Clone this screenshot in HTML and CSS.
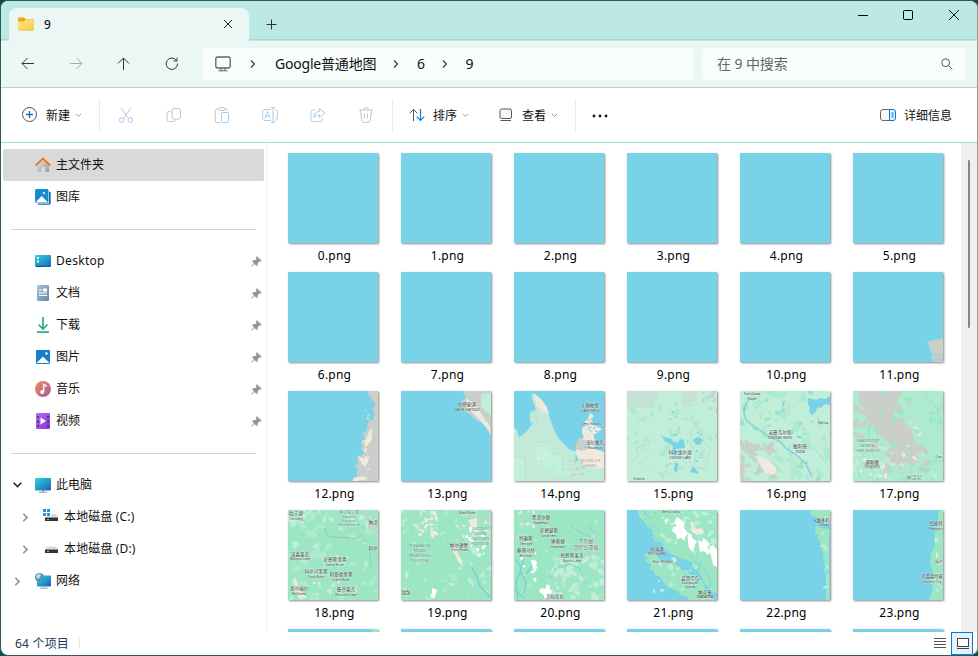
FILE: index.html
```html
<!DOCTYPE html>
<html lang="zh-CN">
<head>
<meta charset="utf-8">
<title>9</title>
<link rel="stylesheet" href="styles.css">
</head>
<body>
<div class="window">
  <header class="titlebar">
    <div class="tab">
      <svg class="folder" width="16" height="14" viewBox="0 0 16 14"><defs><linearGradient id="gf" x1="0" y1="0" x2="1" y2="1"><stop offset="0" stop-color="#ffe69a"/><stop offset="1" stop-color="#ffc93e"/></linearGradient></defs><path d="M0 2Q0 .5 1.5 .5H5.5Q6.300 .5 7 1.500L7.500 2H14.500Q16 2 16 3.500V8H0Z" fill="#f0a90b"/><path d="M0 4.500H6L8 2.300H14.500Q16 2.300 16 3.500V12Q16 13.300 14.700 13.300H1.300Q0 13.300 0 12Z" fill="url(#gf)"/><path d="M.3 13H15.700" stroke="#e9b23a" stroke-width=".7"/></svg>
      <span class="tab-name">9</span>
      <svg class="tab-close" width="10" height="10" viewBox="0 0 10 10"><path d="M1 1 9 9M9 1 1 9" stroke="#222" fill="none"/></svg>
    </div>
    <svg class="newtab" width="11" height="11" viewBox="0 0 11 11"><path d="M5.500 .5V10.500M.5 5.500H10.500" stroke="#333" fill="none"/></svg>
    <div class="controls">
      <svg width="46" height="30" viewBox="0 0 46 30"><path d="M19 14.500H29" stroke="#000"/></svg>
      <svg width="46" height="30" viewBox="0 0 46 30"><rect x="18.500" y="9.500" width="9" height="9" rx="1" fill="none" stroke="#000"/></svg>
      <svg width="46" height="30" viewBox="0 0 46 30"><path d="M18 9 28 19M28 9 18 19" stroke="#111"/></svg>
    </div>
  </header>
  <nav class="nav">
    <div class="nav-buttons">
      <svg viewBox="0 0 48 32"><path d="M30 15.500H18M23.500 10 18 15.500 23.500 21"/></svg>
      <svg class="dim" viewBox="0 0 48 32"><path d="M18 15.500H30M24.500 10 30 15.500 24.500 21"/></svg>
      <svg viewBox="0 0 48 32"><path d="M23.500 22V10M18 15.500 23.500 10 29 15.500"/></svg>
      <svg viewBox="0 0 48 32"><path d="M28.500 12.500A5.700 5.700 0 1 0 29.500 15.500M29 9.800V13H25.600"/></svg>
    </div>
    <div class="address">
      <svg class="pc" width="16" height="16" viewBox="0 0 16 16"><rect x=".8" y="1" width="14.400" height="11" rx="1.800" fill="none" stroke="#5c6362" stroke-width="1.300"/><path d="M6 12V14.500M10 12V14.500M3.500 14.800H12.500" stroke="#5c6362" fill="none"/></svg>
      <svg class="crumb-arrow" width="6" height="10" viewBox="0 0 6 10"><path d="M1 1.500 4.500 5 1 8.500"/></svg>
      <span class="crumb first">Google普通地图</span>
      <svg class="crumb-arrow" width="6" height="10" viewBox="0 0 6 10"><path d="M1 1.500 4.500 5 1 8.500"/></svg>
      <span class="crumb">6</span>
      <svg class="crumb-arrow" width="6" height="10" viewBox="0 0 6 10"><path d="M1 1.500 4.500 5 1 8.500"/></svg>
      <span class="crumb">9</span>
    </div>
    <div class="search"><span>在 9 中搜索</span>
      <svg width="12" height="12" viewBox="0 0 12 12"><circle cx="4.700" cy="4.700" r="3.900"/><path d="M7.500 7.500 11.300 11.300"/></svg>
    </div>
  </nav>
  <div class="toolbar">
    <div class="tool new"><svg width="16" height="16" viewBox="0 0 16 16"><circle cx="8.500" cy="7.500" r="7" fill="#fff" stroke="#555"/><path d="M8.500 4V11M5 7.500H12" stroke="#0870c4" stroke-width="1.300"/></svg><span>新建</span><svg class="down" width="7" height="5" viewBox="0 0 7 5"><path d="M1 1 3.500 3.500 6 1"/></svg></div>
    <i class="sep"></i>
    <div class="actions">
      <svg viewBox="0 0 16 16"><path class="g" d="M3 .5 10 11M13 .5 6 11"/><circle class="b" cx="3.700" cy="13" r="2.300"/><circle class="b" cx="12.300" cy="13" r="2.300"/></svg>
      <svg viewBox="0 0 16 16"><path class="g" d="M4.500 4.500H3Q1 4.500 1 6.500V12Q1 14.500 3.500 14.500H7Q9 14.500 9 12.800"/><rect class="b" x="6" y="1.500" width="8.500" height="10.500" rx="2"/></svg>
      <svg viewBox="0 0 16 16"><path class="g" d="M5 2H3Q1.300 2 1.300 3.700V14Q1.300 15.500 3 15.500H6M11 2H12Q13.300 2 13.300 3.500"/><rect class="g" x="4.500" y=".7" width="6.500" height="2.800" rx="1.200"/><rect class="b" x="7.500" y="5.500" width="7" height="10" rx="1"/></svg>
      <svg viewBox="0 0 16 16"><path class="g" d="M9 2.500H3Q.6 2.500 .6 5V11Q.6 13.500 3 13.500H9M13 2.500Q15.400 2.500 15.400 5V11Q15.400 13.500 13 13.500"/><path class="b" d="M11 .5V15.500M9 .5H13M9 15.500H13M2.700 11.500 5.500 4.500 8.300 11.500M3.700 9H7.300"/></svg>
      <svg viewBox="0 0 16 16"><path class="g" d="M5 3H3.500Q1 3 1 5.500V12Q1 14.500 3.500 14.500H10Q12.500 14.500 12.500 12V11"/><path class="b" d="M9.500 1.500 14.800 6 9.500 10.500V8Q6 7.600 3.800 10.500Q4.500 4.800 9.500 4.200Z"/></svg>
      <svg viewBox="0 0 16 16"><path class="g" d="M1 3H15M5.500 3Q5.500 .7 8 .7T10.500 3M2.500 3 3.600 13.300Q3.800 15.400 6 15.400H10Q12.200 15.400 12.400 13.300L13.500 3M6.500 6.500V11.500M9.500 6.500V11.500"/></svg>
    </div>
    <i class="sep"></i>
    <div class="tool sort"><svg width="16" height="14" viewBox="0 0 16 14"><path d="M4.500 13V1.500M.7 5.300 4.500 1.500 8.300 5.300" fill="none" stroke="#555"/><path d="M11.500 1V12.500M7.700 8.700 11.500 12.500 15.300 8.700" fill="none" stroke="#0a7bd6" stroke-width="1.200"/></svg><span>排序</span><svg class="down" width="7" height="5" viewBox="0 0 7 5"><path d="M1 1 3.500 3.500 6 1"/></svg></div>
    <div class="tool view"><svg width="14" height="14" viewBox="0 0 14 14"><rect x="1" y="1" width="11.500" height="9.500" rx="1.500" fill="#f7f7f7" stroke="#555"/><path d="M1.500 12.500H12" stroke="#555"/></svg><span>查看</span><svg class="down" width="7" height="5" viewBox="0 0 7 5"><path d="M1 1 3.500 3.500 6 1"/></svg></div>
    <i class="sep"></i>
    <svg class="more" width="16" height="4" viewBox="0 0 16 4"><circle cx="2" cy="2" r="1.400"/><circle cx="8" cy="2" r="1.400"/><circle cx="14" cy="2" r="1.400"/></svg>
    <div class="tool details"><svg width="16" height="12" viewBox="0 0 16 12"><path d="M10 .5H3Q.5 .5 .5 3V9Q.5 11.500 3 11.500H10" fill="#fafafa" stroke="#666"/><path d="M9.500 .5H13Q15.500 .5 15.500 3V9Q15.500 11.500 13 11.500H9.500ZM11.300 4H13.800M11.300 6H13.800M11.300 8H13.800" fill="#edf7ff" stroke="#0874c9"/></svg><span>详细信息</span></div>
  </div>
  <main class="body">
    <aside class="sidebar" id="sidebar">
      <div class="row selected"><svg class="icon" viewBox="0 0 16 16"><defs><linearGradient id="gh" y2="1" x2="1"><stop stop-color="#e7e7e7"/><stop offset="1" stop-color="#999"/></linearGradient></defs><path d="M2 7 8 2 14 7V15H10.300V10H6.500V15H2Z" fill="url(#gh)"/><path d="M.7 8.500 8 1.500 15.300 8.500" fill="none" stroke="#ea7717" stroke-width="1.800"/></svg><span>主文件夹</span></div>
      <div class="row"><svg class="icon" viewBox="0 0 16 16"><path d="M14 2.500Q15.700 2.500 15.700 4V14Q15.700 15.700 14 15.700H4Q2.500 15.700 2.500 14.500H14Z" fill="#176aaf"/><rect width="13.500" height="14" rx="1.500" fill="#188ad4"/><path d="M.5 13.500 6.700 7 13 13.500Z" fill="#fff"/><circle cx="9" cy="4" r="1.100" fill="#fff"/></svg><span>图库</span></div>
      <hr>
      <div class="row pinned"><svg class="icon" viewBox="0 0 16 16"><defs><linearGradient id="gd" x2="1" y2="1"><stop stop-color="#38d2df"/><stop offset="1" stop-color="#1267b7"/></linearGradient></defs><rect y="2" width="16" height="12" rx="1" fill="url(#gd)"/><path d="M2 4H4V6H2ZM2 7.500H4V9.500H2Z" fill="#d9ffff"/><path d="M1 13.300H10M11 13.300H12M13 13.300H14" stroke="#064b80"/></svg><span class="latin">Desktop</span></div>
      <div class="row pinned"><svg class="icon" viewBox="0 0 16 16"><defs><linearGradient id="gt" x2="1" y2="1"><stop stop-color="#afc7de"/><stop offset="1" stop-color="#6684a5"/></linearGradient></defs><rect x="2" width="12" height="16" rx="1" fill="url(#gt)"/><path d="M4 5H7M4 8H12M4 10.500H12" stroke="#fff"/><path d="M8 3.500H12V6.500H8Z" fill="#fff"/></svg><span>文档</span></div>
      <div class="row pinned"><svg class="icon" viewBox="0 0 16 16"><path d="M8 0V12M3.500 7.500 8 12 12.500 7.500M2 15.200H14" fill="none" stroke="#20b28c" stroke-width="1.700"/></svg><span>下载</span></div>
      <div class="row pinned"><svg class="icon" viewBox="0 0 16 16"><rect x="1" y="1" width="14" height="14" rx="1" fill="#137fca"/><path d="M1.500 14 8 7.500 14.500 14Z" fill="#fff"/><circle cx="11.500" cy="4.500" r="1.200" fill="#fff"/></svg><span>图片</span></div>
      <div class="row pinned"><svg class="icon" viewBox="0 0 16 16"><defs><linearGradient id="gm" x2="1" y2="1"><stop stop-color="#f08b57"/><stop offset="1" stop-color="#a95aa5"/></linearGradient></defs><circle cx="8" cy="8" r="8" fill="url(#gm)"/><path d="M8.700 11V3.500L11 4.500V6" fill="none" stroke="#fff" stroke-width="1.300"/><circle cx="7.200" cy="11" r="2" fill="#fff"/></svg><span>音乐</span></div>
      <div class="row pinned"><svg class="icon" viewBox="0 0 16 16"><defs><linearGradient id="gv" x2="1" y2="1"><stop stop-color="#b66af0"/><stop offset="1" stop-color="#7f3bd5"/></linearGradient></defs><rect x="1" width="14" height="16" rx="1" fill="url(#gv)"/><path d="M5.500 4.500 11 8 5.500 11.500Z" fill="#fff"/><path d="M3 3V14M13 3V14" stroke="#43227d" stroke-width="1.500" stroke-dasharray="2 2.500"/></svg><span>视频</span></div>
      <hr>
      <div class="row tree"><svg class="arrow open" width="9" height="6" viewBox="0 0 9 6"><path d="M.7 .8 4.500 4.600 8.300 .8"/></svg><svg class="icon" viewBox="0 0 16 16"><path d="M7 13H9V15H7Z" fill="#aab6c1"/><path d="M4 15.200H12" stroke="#8c9cab"/><rect y="1" width="16" height="12.500" rx=".8" fill="url(#gd)"/></svg><span>此电脑</span></div>
      <div class="row tree child"><svg class="arrow" width="6" height="9" viewBox="0 0 6 9"><path d="M.8 .7 4.600 4.500 .8 8.300"/></svg><svg class="icon" viewBox="0 0 16 16"><path d="M0 0H3V3H0ZM4 0H7V3H4ZM0 4H3V7H0ZM4 4H7V7H4Z" fill="#2593dc"/><path d="M8 5H13L15 8.500H3L3.500 7.500H8Z" fill="#d8dcdc"/><rect x="2" y="8.500" width="13" height="3.500" rx=".5" fill="#333"/><path d="M4 10.500H6" stroke="#5cdb78"/></svg><span>本地磁盘 (C:)</span></div>
      <div class="row tree child"><svg class="arrow" width="6" height="9" viewBox="0 0 6 9"><path d="M.8 .7 4.600 4.500 .8 8.300"/></svg><svg class="icon" viewBox="0 0 16 16"><path d="M2 8.500 4 5.500H13L15 8.500Z" fill="#d8dcdc"/><rect x="2" y="8.500" width="13" height="3.500" rx=".5" fill="#333"/><path d="M4 10.500H6" stroke="#5cdb78"/></svg><span>本地磁盘 (D:)</span></div>
      <div class="row tree"><svg class="arrow" width="6" height="9" viewBox="0 0 6 9"><path d="M.8 .7 4.600 4.500 .8 8.300"/></svg><svg class="icon" viewBox="0 0 16 16"><rect x="2" y="2.500" width="14" height="11" rx=".8" fill="url(#gd)"/><path d="M9 13V15M5 15.200H13" stroke="#9aabb8"/><circle cx="4.500" cy="4.500" r="4.500" fill="#4e95bb"/><path d="M2 2Q5-.5 6 2.500L4 5.500Q1 6 1 4Z" fill="#bddde9"/></svg><span>网络</span></div>
    </aside>
    <section class="files" id="files"></section>
    <div class="scroll"><div class="thumb"></div></div>
  </main>
  <footer class="status"><span>64 个项目</span><i></i>
    <svg class="list" width="12" height="11" viewBox="0 0 12 11"><path d="M0 .5H12M0 3.500H12M0 6.500H12M0 9.500H12" stroke="#555"/></svg>
    <div class="large"><svg width="13" height="12" viewBox="0 0 13 12"><rect x="1.500" y=".5" width="11" height="8" fill="#fff" stroke="#444"/><path d="M1 10.500H13" stroke="#444"/></svg></div>
  </footer>
</div>
<script src="maps.js"></script>
</body>
</html>
```
FILE: styles.css
```css
* { box-sizing: border-box; }
html, body { margin: 0; height: 100%; }
body { background: #064f49; font: 12px "Noto Sans", "Noto Sans CJK SC", sans-serif; color: #111; overflow: hidden; }
svg { display: block; flex: none; }
i { display: block; }
.window { width: 978px; height: 656px; display: flex; flex-direction: column; background: #fff; border: 1px solid #2f5955; border-right-color: #999; border-radius: 8px; overflow: hidden; }
.titlebar { height: 40px; flex: none; background: #bce9e3; border-bottom: 1px solid #c5e6e2; display: flex; align-items: flex-start; box-shadow: inset 0 -1px #a9d6d0; }
.tab { width: 240px; height: 33px; margin: 7px 0 0 8px; background: #eaf7f5; border-radius: 8px 8px 0 0; display: flex; align-items: center; padding: 0 16px 2px 9px; }
.tab-name { margin-left: 10px; padding-top: 2px; flex: 1; font-weight: 500; }
.newtab { margin: 18px 0 0 17px; }
.controls { margin-left: auto; display: flex; }
.nav { height: 47px; flex: none; background: #eaf7f5; border-bottom: 1px solid #b1d5d1; display: flex; align-items: center; padding: 0 11px 0 3px; font-size: 14px; }
.nav-buttons { display: flex; }
.nav-buttons svg { width: 48px; height: 32px; fill: none; stroke: #333; stroke-width: 1; }
.nav-buttons .dim { stroke: #a3adab; }
.address, .search { height: 32px; background: #f9fdfc; border-radius: 4px; display: flex; align-items: center; }
.address { width: 492px; margin-left: 6px; padding-left: 13px; }
.pc { margin-right: 19px; }
.crumb-arrow { fill: none; stroke: #333; stroke-width: 1.1; margin-right: 18px; }
.crumb { margin-right: 17px; padding-bottom: 2px; letter-spacing: -.4px; }
.crumb.first { width: 101px; margin: 0 17px 0 1px; letter-spacing: -.2px; white-space: nowrap; }
.search { width: 264px; margin-left: 8px; padding: 0 13px 0 15px; justify-content: space-between; color: #626766; }
.search span { padding-bottom: 2px; letter-spacing: -.1px; }
.search svg { fill: none; stroke: #555; }
.toolbar { height: 55px; flex: none; border-bottom: 1px solid #a7d7d1; display: flex; align-items: center; padding: 0 25px 0 20px; }
.tool { display: flex; align-items: center; }
.tool span { margin-left: 8px; line-height: 18px; padding-top: 2px; }
.down { fill: none; stroke: #999; margin-left: 5px; }
.sep { width: 1px; height: 32px; background: #e9e9e9; }
.new { width: 78px; }
.new span { margin-left: 9px; }
.actions { display: flex; margin: 0 2px; }
.actions svg { width: 48px; height: 16px; fill: none; }
.actions .g { stroke: #c6c6c6; }
.actions .b { stroke: #a1cdf0; }
.sort { margin-left: 16px; width: 90px; }
.view { width: 76px; }
.view span { margin-left: 9px; }
.more { margin-left: 16px; margin-top: 2px; fill: #111; }
.details { margin-left: auto; }
.body { height: 489px; flex: none; display: flex; background: #fff; }
.sidebar { width: 266px; border-right: 1px solid #f1f1f1; padding: 6px 2px 0; }
.row { height: 32px; display: flex; align-items: center; padding: 0 2px 2px 32px; border-radius: 2px; }
.row.selected { background: #d9d9d9; width: 261px; }
.row .icon { width: 16px; height: 16px; margin: 2px 5px 0 0; }
.row .latin { letter-spacing: .3px; padding-top: 1px; }
.sidebar hr { margin: 16px 8px 15px; border: 0; height: 1px; background: #d2d2d2; }
.pin { margin: 2px 0 0 auto; }
.row.tree { padding-left: 10px; }
.arrow { width: 9px; margin: 2px 13px 0 0; fill: none; stroke: #8b8b8b; stroke-width: 1.5; }
.arrow.open { stroke: #222; }
.row.child { padding-left: 18px; letter-spacing: .14px; }
.files { width: 694px; padding: 10px 0 0 21px; display: grid; grid-template-columns: repeat(6, 113px); grid-auto-rows: 119px; overflow: hidden; align-content: start; }
.file { width: 93px; text-align: center; font-size: 12px; letter-spacing: .2px; color: #000; }
.map { width: 90px; height: 90px; margin-bottom: 4px; overflow: hidden; box-shadow: 1px 1px 2px #888; }
.map text { letter-spacing: 0; text-anchor: middle; font-family: "Noto Sans CJK SC", sans-serif; paint-order: stroke; stroke: #ffffff90; stroke-width: .7px; }
.scroll { width: 16px; background: #f0f0f0; padding: 17px 0 0 7px; }
.thumb { width: 2px; height: 168px; background: #858585; border-radius: 1px; }
.status { height: 23px; flex: none; display: flex; align-items: center; padding-left: 14px; color: #1e395b; }
.status span { letter-spacing: .2px; padding-bottom: 1px; }
.status i { width: 1px; height: 11px; background: #e7e7e7; margin-left: 10px; }
.list { margin-left: auto; }
.large { width: 22px; height: 23px; margin: 0 4px 0 5px; border: 1px solid #0879d0; background: #e6f3fc; display: flex; align-items: center; justify-content: center; }
```
FILE: maps.js
```js
const W = '#78d3e9', M = '#c0eed9', G = '#9ce6c3', L = '#aeead0', Y = '#cacfca', C = '#f0eade', F = '#ffffff';
function rng(s) { return () => (s = (s * 16807) % 2147483647) / 2147483647; }
/* Scatters small irregular patches: [colour, count, size, x, y, width, height] */
function scatter(list, seed) {
  const r = rng(seed * 7919 + 13);
  for (let i = 0; i < 9; i++) r();
  return list.map(([c, n, s, x, y, w, h]) => {
    let d = '';
    for (let i = 0; i < n; i++) {
      const cx = x + r() * w, cy = y + r() * h, z = s * (.45 + r()), tilt = r() * 3;
      for (let k = 0; k < 7; k++) {
        const a = k * .9, q = z * (.5 + r() * .7);
        const px = Math.cos(a) * q, py = Math.sin(a) * q * .55;
        d += (k ? 'L' : 'M') + (cx + px * Math.cos(tilt) - py * Math.sin(tilt)).toFixed(1) + ' ' + (cy + px * Math.sin(tilt) + py * Math.cos(tilt)).toFixed(1);
      }
      d += 'Z';
    }
    return `<path fill="${c}" d="${d}"/>`;
  }).join('');
}
const p = (c, d) => `<path fill="${c}" d="${d}"/>`;
const l = (c, w, d) => `<path fill="none" stroke="${c}" stroke-width="${w}" d="${d}"/>`;
const t = (x, y, s, z = 4.6, c = '#303535') => `<text x="${x}" y="${y}" font-size="${z}" fill="${c}">${s}</text>`;
const T = '#3f8577';
const maps = {
  11: [W, p(Y, 'M74 70 90 66V90H80V88L78 85 79 81 77 77 76 73Z') + l(W, .7, 'M79 83H90M80 86H88M81 88H90')],
  12: [W, p(Y, 'M81 0H90V90H64L66 87 70 85 68 82 70 78 67 76 70 72 69 65 75 64 76 61 73 58 75 55 73 54 77 48 75 42 78 40 79 37 80 31 83 29 87 29 85 28 87 23 84 18 87 15 87 12 83 9 84 7 80 4Z') + p(C, 'M81 41 84 37 84 49 80 54 77 56 77 50ZM70 65 77 68 81 65 80 71 77 76 73 71ZM65 87 76 85 80 88 70 90H65Z') + p(Y, 'M76 18 79 19 78 22ZM80 22 83 25 79 26Z') + scatter([[C, 8, 1.8, 73, 25, 15, 60], [W, 5, 1, 76, 35, 6, 20]], 12)],
  13: [W, p(Y, 'M62 0H90V45L86 38 82 32 75 29 70 24 64 20 61 15 62 9 65 7Z') + p(M, 'M80 3 90 2V25L84 20 80 15Z') + p(C, 'M65 7 76 16 81 24 88 34 90 43 84 35 75 25 67 17Z') + t(66, 15, '中萨勒港') + t(66, 20, 'Sachs Harbour', 3.8)],
  14: [W, p('#c3e9d9', 'M18 2 25 8 31 15 36 27 40 39 46 49 55 58 62 61 61 70 90 70V90H0V36L3 39 5 46 10 43 18 34 16 30 16 21 22 19 20 12 18 8Z') + p(C, 'M20 2 28 9 33 16 35 23 29 21 22 14ZM76 22 80 25 77 28 79 34 84 36 88 38 80 44 80 47 84 53 78 57 90 61V77H75L65 70 61 61 65 55 66 49 70 46 68 42 68 37 73 34 70 31 74 28Z') + p('#c0f1d9', 'M22 51H38V63H48V79H58V84H41V77H30V73H22ZM0 66H11V90H0Z') + p(Y, 'M64 47 72 49 78 57 67 60 61 57Z') + scatter([[W, 24, 1.7, 65, 22, 23, 35], [Y, 9, 2, 50, 70, 25, 18], [W, 5, 1, 65, 68, 24, 20], [W, 8, 1, 16, 20, 8, 14], [C, 5, 2.5, 22, 58, 12, 12]], 14) + l('#b4d3c9', .5, 'M22 51H38V63H48V79H58V88M11 90V66H0') + t(76, 16, '卡佩帕里') + t(76, 21, 'Cape Parry', 3.7) + t(78, 34, 'Letty Harbour', 3.3) + t(81, 53, '波拉图克', 4.2) + t(81, 57.5, 'Paulatuk', 3.5) + t(76, 71, 'INUVIALUIT', 4, '#858b88') + t(76, 75.5, 'LANDS', 4, '#858b88')],
  15: [M, p('#c8e1d5', 'M0 0H31V6H27V17H0ZM55 0H70V10H65V15H55Z') + scatter([[L, 42, 4, 0, 5, 90, 82], [Y, 10, 3, 75, 0, 15, 22], [Y, 4, 1.8, 66, 32, 15, 45], [W, 22, 1.6, 38, 18, 36, 60]], 15) + p(W, 'M34 43 37 46 45 48 46 51 50 53 53 48 57 49 58 57 49 58 50 63 48 65 44 61 46 57 45 54 41 51 38 51ZM66 49 70 46 75 49 74 53 69 54ZM48 71 51 73 50 82 47 79ZM62 71 65 76 68 77 72 83 63 81 65 77Z') + l('#afd4c4', .6, 'M68 35 75 39 76 50 83 58 78 78 67 76 69 62 64 54V39ZM0 75 12 65 9 57 19 54M35 90 38 80 47 86') + t(53, 63, '科尔维尔湖') + t(53, 67.5, 'Colville Lake', 3.7) + t(12, 89, 'Anahik', 3.5)],
  16: [M, scatter([[L, 38, 7, 0, 0, 90, 90], [G, 25, 4, 0, 0, 90, 90], [Y, 40, 4.5, 0, 52, 35, 37], [Y, 8, 2.5, 35, 0, 40, 50], [W, 10, 2, 30, 10, 55, 70]], 16) + p(C, 'M17 64 22 66 26 69 30 70 36 77 37 82 33 84 29 82 26 83 22 77 20 73Z') + p(W, 'M68 7 77 9 80 7 85 8 90 5V14L85 13 81 17 78 16 75 21 72 24 69 21 70 16 68 14Z') + l('#86cee1', 1.500, 'M9 9Q0 18 7 30L18 38 28 45 39 50 47 58 55 63 66 73 72 86') + l('#8bd1e0', .6, 'M60 30 69 46M74 57 88 75') + t(12, 4, 'Fort Good', 3.6) + t(12, 8.5, 'Hope', 3.6) + t(40, 43, '诺曼韦尔斯') + t(40, 47.5, 'Norman Wells', 3.7) + t(60, 57, '图利塔') + t(60, 61.5, 'Tulita', 3.7) + t(83, 33, 'Délı̨nę', 3.6)],
  17: [L, p(Y, 'M5 0H50L47 6 44 8 46 17 41 19 41 25 50 28 53 34 58 37 60 44 63 51 69 60 62 64 60 74 54 72 47 79 42 73 37 73 35 66 32 63 38 54 28 45 22 42 20 34 12 30 16 22 7 14Z') + scatter([[Y, 34, 4.5, 0, 0, 56, 56], [Y, 30, 4, 30, 45, 45, 43], [G, 34, 4, 0, 0, 90, 90], [M, 28, 3.5, 0, 50, 90, 40], [C, 14, 2.5, 0, 65, 36, 22], [C, 10, 2.2, 50, 30, 17, 45]], 17) + l('#8bcfd8', .6, 'M70 0 83 17 89 35M80 90 75 77 65 78') + t(15, 51, 'Naatsihchoh', 3.9, T) + t(14, 56, 'National', 3.9, T) + t(15, 61, 'Park Reserve', 3.9, T) + t(19, 72.5, '通斯滕') + t(19, 77, 'Tungsten', 3.7) + t(61, 88, '纳汉尼', 5, T) + t(86, 67, 'Can', 3.5)],
  18: [G, scatter([[M, 56, 3.6, 0, 0, 90, 90], [L, 36, 5, 0, 0, 90, 90], [C, 8, 2.5, 0, 0, 20, 15], [Y, 8, 3, 76, 0, 14, 18], [C, 9, 2, 5, 70, 55, 19]], 18) + p(C, 'M6 66 9 72 10 78 19 88 11 88 7 79Z') + l('#84bba9', .6, 'M37 18Q39 30 48 27L63 28Q75 31 77 15') + l('#79cbc8', .6, 'M75 25 82 40 83 58') + t(61, 3.8, '纳汉尼公园', 4, T) + t(61, 7.800, 'Nahanni', 3.600, T) + t(61, 11.700, 'National', 3.600, T) + t(61, 15.600, 'Park Reserve', 3.600, T) + t(8, 5.3, '坎宁湖') + t(8, 9.500, 'Cantung', 3.5) + t(12, 45.5, '沃森莱克') + t(12, 50, 'Watson Lake', 3.5) + t(47, 51, '史密斯里弗') + t(47, 55.5, 'Smith River', 3.5) + t(28, 63, '科尔河里弗') + t(28, 67.5, 'Coal River', 3.5) + t(53, 66, '利亚德里弗') + t(53, 70.5, 'Liard River', 3.5) + t(11, 80, '洛尔迪尔') + t(11, 84.5, 'McDame', 3.5) + t(58, 81, '曼乔莱克') + t(58, 85.5, 'Muncho Lake', 3.5) + t(85, 14, '纳汉') + t(85, 40, '利尔')],
  19: [G, scatter([[M, 32, 3.2, 0, 0, 90, 90], [L, 30, 4, 0, 0, 90, 90], [C, 20, 2.6, 12, 0, 25, 28], [C, 12, 2.200, 50, 0, 38, 43], [F, 8, 2.6, 65, 18, 22, 23], [Y, 9, 2.5, 70, 0, 20, 14], [F, 4, 2, 76, 38, 8, 10]], 19) + p(C, 'M52 34 57 43 61 51 62 57 57 51 52 41ZM67 10 76 8 76 19 80 24 78 26 71 19Z') + p(F, 'M31 78 36 80 35 84 33 89 29 86 31 83Z') + l('#74cddd', 1.3, 'M71 58 75 65 79 76 90 88') + t(66, 4.1, 'Toad River', 3.6) + t(19, 37, 'Kwadacha', 4.2, T) + t(19, 42, 'Mspex', 4.2, T) + t(19, 47, 'Wilderness', 4.2, T) + t(18, 52, 'Provincial', 4.2, T) + t(80, 20, 'Northern', 4, T) + t(80, 25, 'Rocky', 4, T) + t(79, 30, 'Mountain', 4, T) + t(79, 35, 'Provincial', 4, T) + t(58, 36.8, '纳尔逊堡') + t(59, 41, 'Fort Ware', 3.6) + t(5, 84, '因戈')],
  20: [G, scatter([[M, 52, 4, 38, 45, 52, 43], [L, 30, 3, 0, 0, 90, 90], [C, 7, 2.4, 5, 0, 15, 16], [F, 15, 2.4, 8, 25, 16, 48], [Y, 14, 2.6, 65, 22, 24, 25]], 20) + p(F, 'M20 49 23 52 22 56 24 58 20 60 18 56ZM27 78 31 79 33 74 36 76 36 80 39 80 36 86 31 89 29 84 25 82Z') + l('#74cfe0', 1.300, 'M10 48 6 62 2 72 4 90M6 60 12 73 10 84M18 56 12 64M2 50 8 58M0 80 10 88') + l('#79cce0', .8, 'M37 68 41 59 56 54 65 58 72 72M57 16 67 23 77 27M80 23 74 14') + t(27, 9, '黑泽尔顿') + t(27, 13.5, 'Hazelton', 3.6) + t(35, 22, '史密瑟斯') + t(35, 26.500, 'Smithers', 3.6) + t(12, 30, '特勒斯') + t(12, 34.5, 'Terrace', 3.6) + t(44, 33, '休斯顿') + t(44, 37.500, 'Houston', 3.6) + t(12, 42, '基蒂马特') + t(12, 46.5, 'Kitimat', 3.6) + t(72, 33, '不列颠', 5, '#66756f') + t(72, 38.500, '哥伦比亚省', 5, '#66756f') + t(58, 47, '伯恩斯莱克') + t(58, 51.5, 'Burns Lake', 3.6) + t(41, 87.5, '贝拉库拉', 4.4)],
  21: [W, p(G, 'M10 0H90V83L83 82 80 77 76 74 76 69 71 61 65 58 65 52 60 50 54 49 44 44 41 41 37 38 35 33 29 34 25 26 26 20 21 18 17 11 13 8ZM19 43 26 42 35 51 42 52 48 54 53 59 60 61 64 65 70 65 76 72 79 82 88 90H62L60 86 55 86 50 81 42 78 38 74 33 67 28 65 27 61 22 59 25 55 18 51 21 47 16 46Z') + scatter([[M, 34, 3.4, 30, 2, 58, 40], [M, 28, 2.6, 27, 48, 45, 34], [W, 38, 1.4, 14, 2, 26, 34], [W, 18, 1.4, 50, 42, 38, 40]], 21) + p(F, 'M50 7 54 10 58 13 56 17 59 20 61 24 58 27 58 31 54 28 50 29 49 24 45 21 46 17 50 16 47 13ZM61 23 64 24 66 29 70 31 68 35 66 42 62 38 61 33ZM71 30 75 32 76 28 79 30 83 34 80 38 84 41 81 45 77 41 73 42ZM82 37 86 35 90 40V57L86 55 84 46ZM37 10 41 9 40 14Z') + p(C, 'M63 11 66 13 66 17 70 19 74 18 77 21 76 24 70 25 65 22Z') + l(W, 1, 'M22 14 25 24 31 31 35 39 43 44 50 47 62 54 66 60 71 67 76 72 83 80M63 45 66 50 71 55M73 51 73 56 70 62M76 58 81 64 84 75') + t(30, 40.5, '哈迪港') + t(30, 44.8, 'Port Hardy', 3.700) + t(36, 53, 'Port McNeill', 3.600) + t(63, 70, '温哥华岛') + t(63, 74.3, 'Vancouver', 3.600) + t(63, 78.3, 'Island', 3.600) + t(78, 83.5, '纳奈莫') + t(78, 88, 'Nanaimo', 3.800, '#111') + t(44, 2.9, 'Bella Coola', 3.3)],
  22: [W, p(G, 'M69 1 72 0H90V11L85 9 79 9 76 7 72 6ZM76 15 80 18 89 19V90H86V64L84 62 85 57 83 50 83 42 80 36 80 32 78 28 77 24 75 23Z') + scatter([[M, 10, 2.5, 82, 4, 6, 77]], 22) + l('#527e83', 1, 'M74 10 77 12 80 11 83 14 89 16') + l(W, 1, 'M82 46 85 52M84 62H89') + t(83, 11.5, '维多利', 4.3) + t(84, 16, 'Victor', 3.6)],
  23: [W, p(G, 'M86 0H90V90H76L80 79 79 75 77 71 80 62 77 55 78 44 82 36 81 32 82 23 84 16Z') + p(C, 'M83 42 86 45 83 49ZM80 66 84 67 82 71Z') + scatter([[M, 12, 2.2, 83, 20, 6, 67]], 23) + t(83, 15, '纽波特', 4.3) + t(83, 19.500, 'Newport', 3.500) + t(79, 68, '克雷森特城', 4.2) + t(78.500, 72.500, 'Crescent City', 3.400) + t(86, 53, '埃尔', 3.800)],
  24: [W, p(G, 'M84 0H90V12H84Z')]
};
document.getElementById('files').innerHTML = Array.from({ length: 30 }, (_, i) => {
  const [bg, art] = maps[i] || [W, ''];
  return `<div class="file"><svg class="map" viewBox="0 0 90 90"><rect width="90" height="90" fill="${bg}"/>${art}</svg>${i < 24 ? `<span>${i}.png</span>` : ''}</div>`;
}).join('');
document.querySelectorAll('.pinned').forEach(row => row.insertAdjacentHTML('beforeend',
  '<svg class="pin" width="11" height="11" viewBox="0 0 11 11"><path d="M6 .3 10.700 4.700 9.600 5.700 8.600 5.300 6.800 7.200 6.700 9 5.600 10 3.500 7.900 .8 10.500H.3V10L3 7.300 1 5.300 2 4.200 4 4.200 5.500 2.500 5 1.300Z" fill="#8e989e"/></svg>'));
```
